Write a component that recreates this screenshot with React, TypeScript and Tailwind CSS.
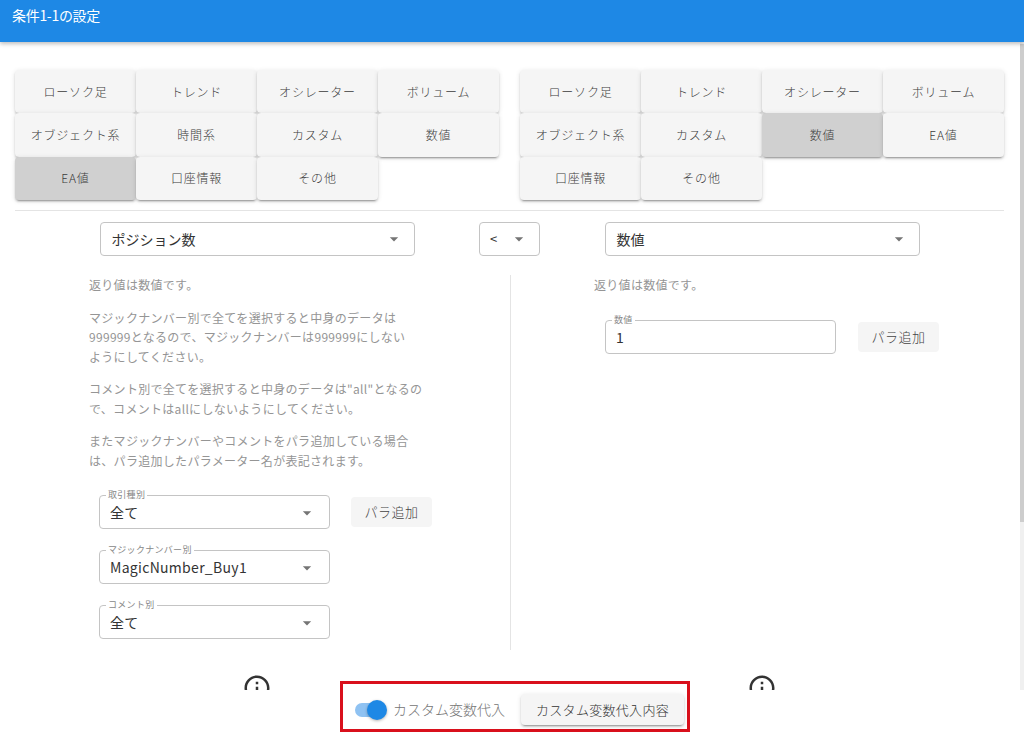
import React from "react";

const raised =
  "shadow-[0_3px_1px_-2px_rgba(0,0,0,0.2),0_2px_2px_0_rgba(0,0,0,0.14),0_1px_5px_0_rgba(0,0,0,0.12)]";

const leftTabs = [
  "ローソク足",
  "トレンド",
  "オシレーター",
  "ボリューム",
  "オブジェクト系",
  "時間系",
  "カスタム",
  "数値",
  "EA値",
  "口座情報",
  "その他",
];

const rightTabs = [
  "ローソク足",
  "トレンド",
  "オシレーター",
  "ボリューム",
  "オブジェクト系",
  "カスタム",
  "数値",
  "EA値",
  "口座情報",
  "その他",
];

const Arrow = () => (
  <svg viewBox="0 0 24 24" className="w-[20px] h-[20px] fill-[#757575] shrink-0">
    <path d="M7 10l5 5 5-5z" />
  </svg>
);

const InfoIcon = () => (
  <svg viewBox="0 0 24 24" className="w-[30px] h-[30px] fill-[#333]">
    <path d="M11 7h2v2h-2zm0 4h2v6h-2zm1-9C6.48 2 2 6.48 2 12s4.48 10 10 10 10-4.48 10-10S17.52 2 12 2zm0 18c-4.41 0-8-3.59-8-8s3.59-8 8-8 8 3.59 8 8-3.59 8-8 8z" />
  </svg>
);

const TabGrid = ({ tabs, active }: { tabs: string[]; active: string }) => (
  <div className="grid grid-cols-4 w-[484px] auto-rows-[43.4px]">
    {tabs.map((t) => (
      <button
        key={t}
        className={`${raised} rounded-[4px] text-[12px] font-light tracking-[0.8px] text-[#3c3c3c] ${
          t === active ? "bg-[#d0d0d0]" : "bg-[#f5f5f5]"
        }`}
      >
        {t}
      </button>
    ))}
  </div>
);

const PlainSelect = ({ value, width }: { value: string; width: string }) => (
  <div
    className={`${width} h-[34px] border border-[#c4c4c4] rounded-[4px] flex items-center justify-between pl-[11px] pr-[10px] bg-white`}
  >
    <span className="text-[14px] text-[#333]">{value}</span>
    <Arrow />
  </div>
);

const LabeledField = ({
  label,
  value,
  width,
  arrow = true,
}: {
  label: string;
  value: string;
  width: string;
  arrow?: boolean;
}) => (
  <div
    className={`${width} relative h-[34px] border border-[#c4c4c4] rounded-[4px] flex items-center justify-between pl-[10px] pr-[12px] pt-[2px]`}
  >
    <span className="absolute -top-[7px] left-[6px] bg-white px-[2px] text-[9px] leading-[12px] text-[#888]">
      {label}
    </span>
    <span className="text-[14px] text-[#333]">{value}</span>
    {arrow && <Arrow />}
  </div>
);

const ParaButton = () => (
  <button className="w-[81px] h-[30px] rounded-[4px] bg-[#f5f5f5] text-[13px] font-light text-[#444] tracking-[0.5px]">
    パラ追加
  </button>
);

export default function App() {
  return (
    <div className="w-[1024px] h-[734px] overflow-hidden bg-white relative font-['Noto_Sans_CJK_JP','Noto_Sans',sans-serif]">
      <header className="h-[42px] bg-[#1e88e5] shadow-[0_2px_4px_rgba(0,0,0,0.25)] px-[12px] pt-[5px] relative z-10">
        <h1 className="text-[14px] text-white tracking-[-0.3px]">条件1-1の設定</h1>
      </header>

      <div className="flex">
        <main className="h-[648px] overflow-hidden flex-1 pl-[15px] pt-[28px]">
          <div className="flex gap-[21px]">
            <TabGrid tabs={leftTabs} active="EA値" />
            <TabGrid tabs={rightTabs} active="数値" />
          </div>

          <div className="w-[989px] mt-[10px] border-t border-[#e4e4e4]" />

          <div className="grid grid-cols-[484px_21px_484px] mt-[11px]">
            <div className="flex justify-center">
              <PlainSelect value="ポジション数" width="w-[315px]" />
            </div>
            <div className="flex justify-center">
              <div className="w-[61px] shrink-0 h-[34px] border border-[#c4c4c4] rounded-[4px] flex items-center justify-between pl-[10px] pr-[10px]">
                <span className="text-[13px] text-[#333]">&lt;</span>
                <Arrow />
              </div>
            </div>
            <div className="flex justify-center">
              <PlainSelect value="数値" width="w-[315px]" />
            </div>
          </div>

          <div className="flex mt-[19px] w-[989px] h-[375px]">
            <section className="w-[495px] pl-[74px] text-[12px] leading-[19.5px] text-[#959595] tracking-[0.3px]">
              <p>返り値は数値です。</p>
              <p className="mt-[13px]">
                マジックナンバー別で全てを選択すると中身のデータは
                <br />
                999999となるので、マジックナンバーは999999にしない
                <br />
                ようにしてください。
              </p>
              <p className="mt-[13px]">
                コメント別で全てを選択すると中身のデータは"all"となるの
                <br />
                で、コメントはallにしないようにしてください。
              </p>
              <p className="mt-[13px]">
                またマジックナンバーやコメントをパラ追加している場合
                <br />
                は、パラ追加したパラメーター名が表記されます。
              </p>

              <div className="mt-[25px] pl-[10px] flex flex-col gap-[21px]">
                <div className="flex items-center gap-[21px]">
                  <LabeledField label="取引種別" value="全て" width="w-[231px]" />
                  <ParaButton />
                </div>
                <LabeledField label="マジックナンバー別" value="MagicNumber_Buy1" width="w-[231px]" />
                <LabeledField label="コメント別" value="全て" width="w-[231px]" />
              </div>
            </section>

            <section className="flex-1 border-l border-[#e4e4e4] pl-[83px] text-[12px] leading-[19.5px] text-[#959595] tracking-[0.3px]">
              <p>返り値は数値です。</p>
              <div className="mt-[25px] pl-[11px] flex items-center gap-[22px]">
                <LabeledField label="数値" value="1" width="w-[231px]" arrow={false} />
                <ParaButton />
              </div>
            </section>
          </div>

          <div className="grid grid-cols-[484px_484px] gap-x-[21px] mt-[23px]">
            <div className="flex justify-center">
              <InfoIcon />
            </div>
            <div className="flex justify-center">
              <InfoIcon />
            </div>
          </div>
        </main>

        <div className="w-[4px] h-[648px] bg-[#f0f0f0] flex flex-col">
          <div className="h-[478px] mt-[2px] bg-[#cdcdcd]" />
        </div>
      </div>

      <footer className="h-[44px] flex justify-center pl-[6px]">
        <div className="relative z-10 -mt-[9px] h-[51px] w-[350px] border-[3px] border-[#d9101c] bg-white flex items-center pl-[12px] pt-[6px]">
          <div className="relative w-[30px] h-[14px] rounded-full bg-[#8fc2f2]">
            <span className="absolute -right-[2px] -top-[3px] w-[20px] h-[20px] rounded-full bg-[#1e88e5] shadow-[0_1px_3px_rgba(0,0,0,0.3)]" />
          </div>
          <span className="ml-[8px] text-[14px] font-light text-[#757575]">カスタム変数代入</span>
          <button
            className={`${raised} ml-[16px] w-[163px] h-[31px] rounded-[4px] bg-[#f5f5f5] text-[13px] font-light text-[#333] tracking-[0.3px]`}
          >
            カスタム変数代入内容
          </button>
        </div>
      </footer>
    </div>
  );
}
